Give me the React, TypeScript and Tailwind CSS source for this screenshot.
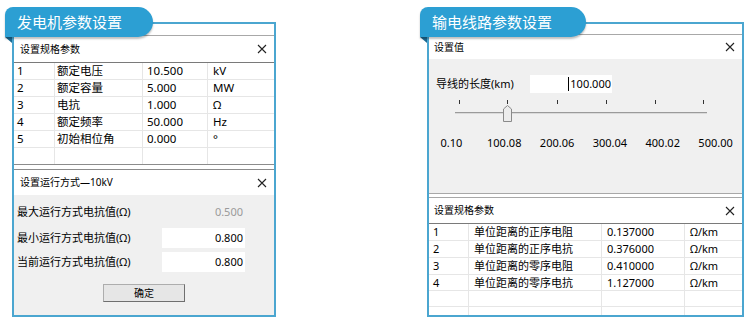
import React from "react";

const font =
  "font-[family-name:'Noto_Sans','Noto_Sans_CJK_SC',sans-serif]";

function CloseX() {
  return (
    <svg width="10" height="10" viewBox="0 0 10 10">
      <path d="M1 1L9 9M9 1L1 9" stroke="#222" strokeWidth="1.1" />
    </svg>
  );
}

function Tab({ title, width }: { title: string; width: string }) {
  return (
    <>
      <div
        className={`absolute left-0 top-0 z-10 h-[30px] ${width} flex items-center rounded-tl-[8px] rounded-r-[15px] bg-[#2c9fd3] pl-[12px] text-[15px] text-white shadow-[0_2px_2px_rgba(0,0,0,0.25)]`}
      >
        {title}
      </div>
      {/* ribbon fold under the tab */}
      <svg className="absolute left-0 top-[30px]" width="7" height="6" viewBox="0 0 7 6">
        <polygon points="0,0 7,0 7,6" fill="#1b6a93" />
      </svg>
    </>
  );
}

function TitleBar({ title, h, pl }: { title: string; h: string; pl: string }) {
  return (
    <div className={`flex ${h} items-center justify-between bg-white ${pl} pr-[7px] text-[10px] text-black`}>
      <span>{title}</span>
      <CloseX />
    </div>
  );
}

const genRows = [
  ["1", "额定电压", "10.500", "kV"],
  ["2", "额定容量", "5.000", "MW"],
  ["3", "电抗", "1.000", "Ω"],
  ["4", "额定频率", "50.000", "Hz"],
  ["5", "初始相位角", "0.000", "°"],
];

const lineRows = [
  ["1", "单位距离的正序电阻", "0.137000", "Ω/km"],
  ["2", "单位距离的正序电抗", "0.376000", "Ω/km"],
  ["3", "单位距离的零序电阻", "0.410000", "Ω/km"],
  ["4", "单位距离的零序电抗", "1.127000", "Ω/km"],
];

function GenTable() {
  return (
    <div className="border-t border-[#7a7a7a] bg-white text-[11.5px] text-black">
      {genRows.map((r) => (
        <div key={r[0]} className="flex h-[17px] border-b border-[#e6e6e6]">
          <div className="w-[41px] border-r border-[#e6e6e6] pl-[3px] leading-[16px]">{r[0]}</div>
          <div className="w-[88px] border-r border-[#e6e6e6] pl-[2px] leading-[16px]">{r[1]}</div>
          <div className="w-[65px] border-r border-[#e6e6e6] pl-[4px] leading-[16px]">{r[2]}</div>
          <div className="flex-1 pl-[5px] leading-[16px]">{r[3]}</div>
        </div>
      ))}
      <div className="flex h-[16px]">
        <div className="w-[41px] border-r border-[#e6e6e6]" />
        <div className="w-[88px] border-r border-[#e6e6e6]" />
        <div className="w-[65px] border-r border-[#e6e6e6]" />
        <div className="flex-1" />
      </div>
    </div>
  );
}

function LeftPanel() {
  return (
    <div className="relative h-[310px] w-[272px] shrink-0">
      <Tab title="发电机参数设置" width="w-[148px]" />
      <div className="ml-[7px] mt-[15px] flex h-[295px] w-[264px] flex-col border-2 border-[#4ba6d0] bg-white">
        <div className="h-[11px]" />
        <div className="border-t border-[#a8a8a8]">
          <TitleBar title="设置规格参数" h="h-[26px]" pl="pl-[6px]" />
        </div>
        <GenTable />
        <div className="h-[5px] border-t border-[#8c8c8c] bg-white" />
        <div className="flex flex-1 flex-col border-t border-[#8c8c8c]">
          <TitleBar title="设置运行方式—10kV" h="h-[25px]" pl="pl-[6px]" />
          <div className="flex flex-1 flex-col bg-[#f0f0f0] pl-[3px] pr-[29px] pt-[7px] text-[11px] text-black">
            <div className="flex h-[20px] items-center justify-between">
              <span>最大运行方式电抗值(Ω)</span>
              <span className="w-[83px] pr-[2px] text-right text-[#9a9a9a]">0.500</span>
            </div>
            <div className="mt-[6px] flex h-[20px] items-center justify-between">
              <span>最小运行方式电抗值(Ω)</span>
              <span className="flex h-[20px] w-[83px] items-center justify-end bg-white pr-[2px]">0.800</span>
            </div>
            <div className="mt-[4px] flex h-[20px] items-center justify-between">
              <span>当前运行方式电抗值(Ω)</span>
              <span className="flex h-[20px] w-[83px] items-center justify-end bg-white pr-[2px]">0.800</span>
            </div>
            <div className="mt-[12px] flex justify-center pl-[26px]">
              <button className="h-[18px] w-[82px] border border-[#adadad] border-b-[#6f6f6f] border-r-[#6f6f6f] bg-[#e6e6e6] text-[10px] leading-none text-black">
                确定
              </button>
            </div>
          </div>
        </div>
      </div>
    </div>
  );
}

function Slider() {
  const ticks = [30, 78, 128, 177, 226, 274];
  return (
    <svg width="313" height="28" viewBox="0 0 313 28" className="mt-[5px] block">
      {ticks.map((x) => (
        <rect key={x} x={x} y={2} width={1} height={4} fill="#333" />
      ))}
      <rect x={26} y={14} width={252} height={1} fill="#9a9a9a" />
      <rect x={26} y={15} width={252} height={1} fill="#dadada" />
      <path d="M74.5 23.5V11L78.5 7.5L82.5 11V23.5Z" fill="#ececec" stroke="#8a8a8a" strokeWidth="1" />
    </svg>
  );
}

function LineTable() {
  return (
    <div className="flex flex-1 flex-col border-t border-[#7a7a7a] bg-white text-[11px] text-black">
      {lineRows.map((r, i) => (
        <div key={r[0]} className={`flex ${i === 3 ? "h-[16px]" : "h-[17px]"} border-b border-[#e6e6e6]`}>
          <div className="w-[40px] border-r border-[#e6e6e6] pl-[4px] leading-[16px]">{r[0]}</div>
          <div className="w-[133px] border-r border-[#e6e6e6] pl-[5px] leading-[16px]">{r[1]}</div>
          <div className="w-[83px] border-r border-[#e6e6e6] pl-[5px] leading-[16px]">{r[2]}</div>
          <div className="flex-1 pl-[5px] leading-[16px]">{r[3]}</div>
        </div>
      ))}
      <div className="flex h-[16px] border-b border-[#e6e6e6]">
        <div className="w-[40px] border-r border-[#e6e6e6]" />
        <div className="w-[133px] border-r border-[#e6e6e6]" />
        <div className="w-[83px] border-r border-[#e6e6e6]" />
        <div className="flex-1" />
      </div>
      <div className="flex flex-1">
        <div className="w-[40px] border-r border-[#e6e6e6]" />
        <div className="w-[133px] border-r border-[#e6e6e6]" />
        <div className="w-[83px] border-r border-[#e6e6e6]" />
        <div className="flex-1" />
      </div>
    </div>
  );
}

function RightPanel() {
  const labels = ["0.10", "100.08", "200.06", "300.04", "400.02", "500.00"];
  return (
    <div className="relative ml-[143px] h-[310px] w-[325px] shrink-0">
      <Tab title="输电线路参数设置" width="w-[166px]" />
      <div className="ml-[7px] mt-[15px] flex h-[295px] w-[317px] flex-col border-2 border-[#4ba6d0] bg-white">
        <div className="h-[10px]" />
        <div className="border-t border-[#a8a8a8]">
          <TitleBar title="设置值" h="h-[24px]" pl="pl-[5px]" />
        </div>
        <div className="h-[134px] bg-[#f0f0f0] pt-[16px] text-[11px] text-black">
          <div className="flex h-[18px] items-center pl-[7px]">
            <span className="w-[94px]">导线的长度(km)</span>
            <span className="flex h-[18px] w-[82px] items-center justify-end bg-white pr-[1px]">
              <span className="mr-[1px] h-[14px] w-px bg-black" />
              100.000
            </span>
          </div>
          <Slider />
          <div className="-ml-[4px] mt-[9px] grid h-[16px] w-[317px] grid-cols-6 items-center text-center text-[11px]">
            {labels.map((l) => (
              <span key={l}>{l}</span>
            ))}
          </div>
        </div>
        <div className="h-[4px] border-t border-[#a8a8a8] bg-white" />
        <div className="flex flex-1 flex-col border-t border-[#a8a8a8]">
          <TitleBar title="设置规格参数" h="h-[25px]" pl="pl-[5px]" />
          <LineTable />
        </div>
      </div>
    </div>
  );
}

export default function App() {
  return (
    <div className={`flex h-[324px] w-[751px] items-start bg-white pl-[5px] pt-[7px] ${font}`}>
      <LeftPanel />
      <RightPanel />
    </div>
  );
}
